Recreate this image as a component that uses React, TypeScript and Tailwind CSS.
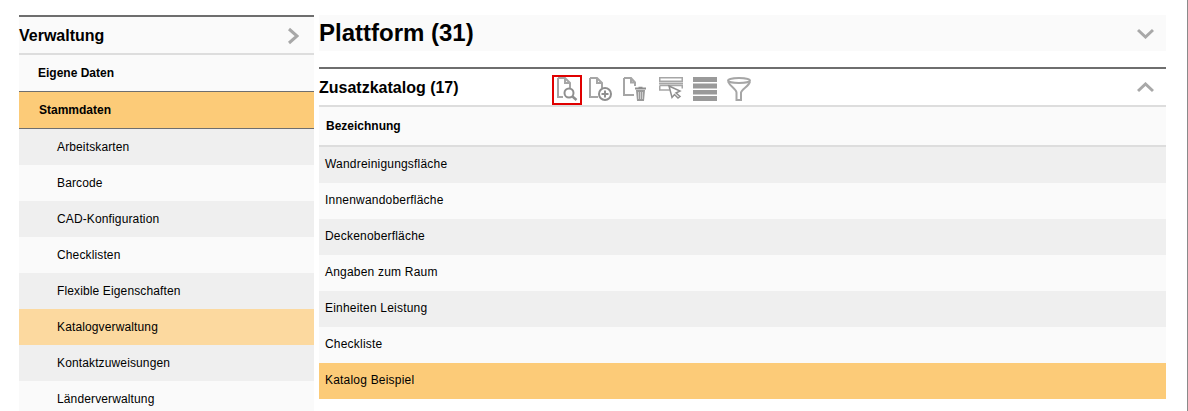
const subItems = [
  { label: "Arbeitskarten", bg: "bg-[#efefef]" },
  { label: "Barcode", bg: "bg-[#fafafa]" },
  { label: "CAD-Konfiguration", bg: "bg-[#efefef]" },
  { label: "Checklisten", bg: "bg-[#fafafa]" },
  { label: "Flexible Eigenschaften", bg: "bg-[#efefef]" },
  { label: "Katalogverwaltung", bg: "bg-[#fcd99f]" },
  { label: "Kontaktzuweisungen", bg: "bg-[#efefef]" },
  { label: "Länderverwaltung", bg: "bg-[#fafafa]" },
];

const rows = [
  { label: "Wandreinigungsfläche", bg: "bg-[#efefef]" },
  { label: "Innenwandoberfläche", bg: "bg-[#fafafa]" },
  { label: "Deckenoberfläche", bg: "bg-[#efefef]" },
  { label: "Angaben zum Raum", bg: "bg-[#fafafa]" },
  { label: "Einheiten Leistung", bg: "bg-[#efefef]" },
  { label: "Checkliste", bg: "bg-[#fafafa]" },
  { label: "Katalog Beispiel", bg: "bg-[#fccb78]" },
];

function Chevron({ dir }: { dir: "right" | "down" | "up" }) {
  const d = dir === "right" ? "M2 2l8 7-8 7" : dir === "down" ? "M1 2l7.500 7L16 2" : "M1 9l7.500-7L16 9";
  const size = dir === "right" ? "w-3 h-[18px]" : "w-[17px] h-[11px]";
  return (
    <svg className={size} viewBox={dir === "right" ? "0 0 12 18" : "0 0 17 11"} fill="none" stroke="#a8a8a8" strokeWidth="3">
      <path d={d} />
    </svg>
  );
}

function IconSearch() {
  return (
    <svg className="w-6 h-6" viewBox="0 0 24 24" fill="none">
      <path d="M3 1h7l5 5v5M10 1v5h5M3 1v19h5" stroke="#a6a6a6" strokeWidth="2" />
      <circle cx="14" cy="16" r="4.500" fill="#fff" stroke="#8f8f8f" strokeWidth="2" />
      <path d="M17.500 19.500l4 3.500" stroke="#8f8f8f" strokeWidth="2.500" />
    </svg>
  );
}

function IconAdd() {
  return (
    <svg className="w-6 h-6" viewBox="0 0 24 24" fill="none">
      <path d="M1 1h7l5 5v5M8 1v5h5M1 1v19h8" stroke="#a6a6a6" strokeWidth="2" />
      <circle cx="16" cy="17" r="6" fill="#fff" stroke="#8f8f8f" strokeWidth="2" />
      <path d="M12.500 17h7M16 13.500v7" stroke="#8f8f8f" strokeWidth="2" />
    </svg>
  );
}

function IconDelete() {
  return (
    <svg className="w-6 h-[25px]" viewBox="0 0 24 25" fill="none">
      <path d="M1 1h7l4 4.500V9M8 1v4.500h4M1 1v17h10" stroke="#a6a6a6" strokeWidth="2" />
      <path d="M12 11.500h11" stroke="#8f8f8f" strokeWidth="2" />
      <path d="M15.500 10.500h4" stroke="#8f8f8f" strokeWidth="1.500" />
      <path d="M13 13h9l-1 11h-7z" fill="#9a9a9a" />
      <path d="M15.500 15v7M17.500 15v7M19.500 15v7" stroke="#dddddd" strokeWidth="0.800" />
    </svg>
  );
}

function IconSelect() {
  return (
    <svg className="w-6 h-6 ml-0.5" viewBox="0 0 24 24" fill="none">
      <rect x="0.750" y="0.750" width="22.500" height="3.500" stroke="#a6a6a6" strokeWidth="1.500" />
      <path d="M0 6.500h24" stroke="#a6a6a6" strokeWidth="2" />
      <path d="M0.750 8.500v4.500h10M0.750 8.500h22.500v3" stroke="#a6a6a6" strokeWidth="1.500" />
      <path d="M10 9l11 5-4 2 4 3.500-2 1.500-3.500-3.500-2.500 3z" fill="#fff" stroke="#8f8f8f" strokeWidth="1.500" />
    </svg>
  );
}

function IconRows() {
  return (
    <svg className="w-6 h-6" viewBox="0 0 24 24" fill="#9a9a9a">
      <rect x="0" y="0" width="24" height="5" />
      <rect x="0" y="6.500" width="24" height="5" />
      <rect x="0" y="13" width="24" height="4.500" />
      <rect x="0" y="19" width="24" height="5" />
    </svg>
  );
}

function IconFilter() {
  return (
    <svg className="w-6 h-6" viewBox="0 0 24 24" fill="none" stroke="#a6a6a6" strokeWidth="2">
      <ellipse cx="12" cy="3.500" rx="11" ry="2.500" />
      <path d="M1 4.500c2 5 8 7 8.500 11V23h4.500v-7.500c1-4 8-6 9-11" />
    </svg>
  );
}

export default function App() {
  return (
    <div className="h-[411px] w-[1188px] overflow-hidden bg-white font-['Liberation_Sans',Arial,sans-serif] text-black flex border-r border-[#8a8a8a]">
      {/* sidebar */}
      <div className="w-[295px] ml-[19px] mt-[15px] shrink-0">
        <div className="h-10 pt-0.5 bg-[#fafafa] border-t-2 border-b-2 border-t-[#6e6e6e] border-b-[#dddddd] flex items-center justify-between pr-[15px]">
          <span className="text-[16px] font-bold">Verwaltung</span>
          <Chevron dir="right" />
        </div>
        <div className="h-[37px] bg-[#fafafa] border-b border-[#6e6e6e] flex items-center pl-[19px] text-[12px] font-bold">Eigene Daten</div>
        <div className="h-[37px] bg-[#fccb78] border-b border-[#6e6e6e] flex items-center pl-5 text-[12px] font-bold">Stammdaten</div>
        {subItems.map((item) => (
          <div key={item.label} className={`h-9 flex items-center pl-[38px] text-[12px] tracking-[0.13px] ${item.bg}`}>{item.label}</div>
        ))}
      </div>

      {/* main */}
      <div className="w-[847px] ml-[5px] mt-[15px] shrink-0">
        <div className="h-9 bg-[#fafafa] flex items-center justify-between pr-3">
          <h1 className="text-[24px] font-bold">Plattform (31)</h1>
          <Chevron dir="down" />
        </div>
        <div className="mt-4 h-[38px] border-t-2 border-[#6e6e6e] flex items-center pr-3">
          <h2 className="text-[16px] font-bold w-[233px] pt-0.5">Zusatzkatalog (17)</h2>
          <div className="flex items-start self-start pt-1.5 flex-1">
            <div className="w-[30px] h-[30px] border-2 border-[#e00000] flex justify-center"><IconSearch /></div>
            <div className="flex gap-2.5 ml-[7px] mt-0.5">
              <IconAdd />
              <IconDelete />
              <IconSelect />
              <IconRows />
              <IconFilter />
            </div>
          </div>
          <Chevron dir="up" />
        </div>
        <div className="h-[42px] pb-px bg-[#fafafa] border-t-2 border-b-2 border-[#dddddd] flex items-center pl-[7px] text-[12px] font-bold">Bezeichnung</div>
        {rows.map((row) => (
          <div key={row.label} className={`h-9 pb-0.5 flex items-center pl-1.5 text-[12px] tracking-[0.2px] ${row.bg}`}>{row.label}</div>
        ))}
      </div>
    </div>
  );
}
